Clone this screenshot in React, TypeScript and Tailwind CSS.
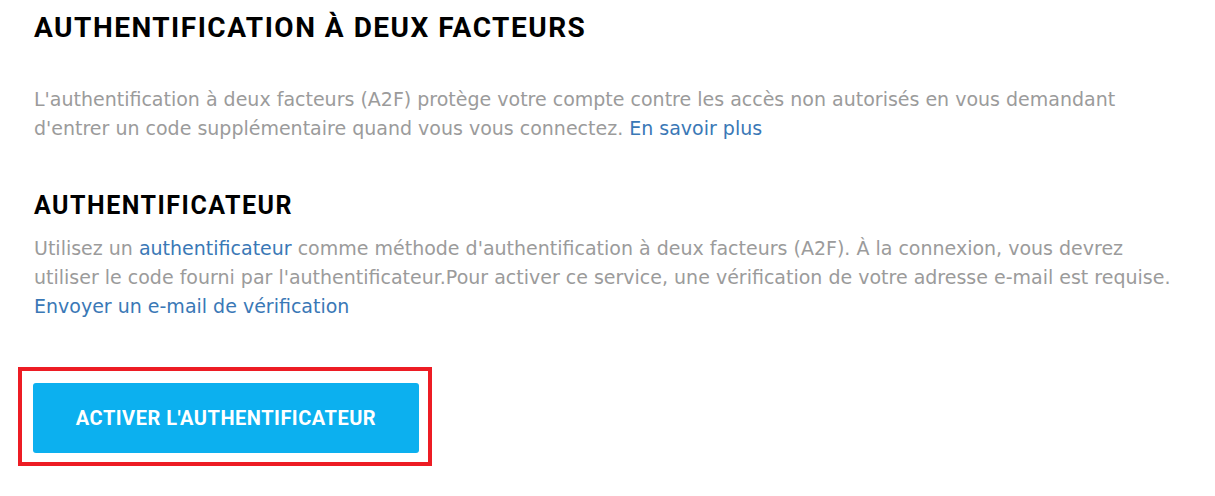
export default function App() {
  return (
    <div className="min-h-[496px] w-[1215px] bg-white pl-[34px] pt-[10px] font-['Roboto',sans-serif]">
      <h1 className="text-[28px] font-bold leading-[36px] tracking-[1.5px] text-black">
        AUTHENTIFICATION À DEUX FACTEURS
      </h1>

      <p className="mt-[39px] max-w-[1170px] font-['DejaVu_Sans',sans-serif] text-[19px] leading-[29px] text-[#9b9b9b]">
        L'authentification à deux facteurs (A2F) protège votre compte contre les accès non autorisés en vous demandant
        <br />
        d'entrer un code supplémentaire quand vous vous connectez.{' '}
        <a href="#" className="text-[#3a78b6]">
          En savoir plus
        </a>
      </p>

      <h2 className="mt-[47px] text-[25px] font-bold leading-[32px] tracking-[1.5px] text-black">AUTHENTIFICATEUR</h2>

      <p className="mt-[12px] max-w-[1170px] font-['DejaVu_Sans',sans-serif] text-[19px] leading-[29px] text-[#9b9b9b]">
        Utilisez un{' '}
        <a href="#" className="text-[#3a78b6]">
          authentificateur
        </a>{' '}
        comme méthode d'authentification à deux facteurs (A2F). À la connexion, vous devrez
        <br />
        utiliser le code fourni par l'authentificateur.Pour activer ce service, une vérification de votre adresse e-mail
        est requise.
        <br />
        <a href="#" className="text-[#3a78b6]">
          Envoyer un e-mail de vérification
        </a>
      </p>

      <div className="mt-[46px] ml-[-16px] inline-block border-4 border-[#ed1c24] pb-[9px] pl-[11px] pr-[9px] pt-[12px]">
        <button
          type="button"
          className="flex h-[70px] w-[386px] items-center justify-center rounded-[3px] bg-[#0cb0ef] text-[20px] font-bold tracking-[0.5px] text-white"
        >
          ACTIVER L'AUTHENTIFICATEUR
        </button>
      </div>
    </div>
  )
}
